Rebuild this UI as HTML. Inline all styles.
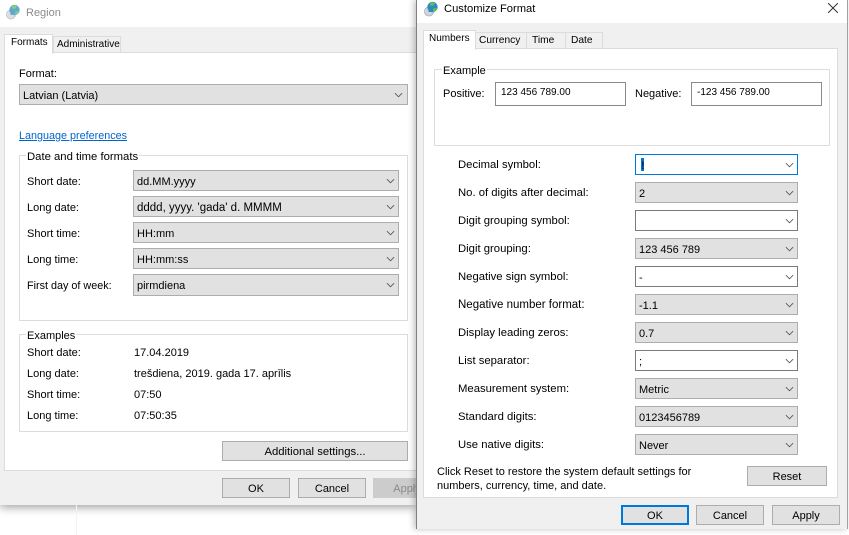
<!DOCTYPE html>
<html><head><meta charset="utf-8">
<style>
html,body{margin:0;padding:0;background:#fff}
#p{position:relative;width:849px;height:535px;overflow:hidden;background:#fff;font-family:"Liberation Sans",sans-serif;font-size:11px;color:#000;filter:blur(.35px)}
#p div,#p svg{position:absolute;box-sizing:border-box}
.t{white-space:nowrap;line-height:14px;height:14px;margin-top:1px}
.r{font-size:11.300px}
.s{background:#e1e1e1;border:1px solid #adadad}
.w{background:#fff;border:1px solid #7a7a7a}
.s svg,.w svg{right:3px;top:50%;margin-top:-3px;width:9px;height:6px}
.s .t,.w .t{left:3px;top:50%;margin-top:-6px}
.b{background:#e1e1e1;border:1px solid #adadad;text-align:center;line-height:20px;white-space:nowrap}
.g{border:1px solid #dcdcdc}
.l{background:#fff;padding:0 1px}
</style></head><body>
<div id="p">
<svg width="0" height="0" style="position:absolute"><defs>
<symbol id="c" viewBox="0 0 10 6"><path d="M1 1 L5 5 L9 1" fill="none" stroke="#555" stroke-width="1"/></symbol>
<symbol id="g" viewBox="0 0 16 16"><circle cx="6" cy="10.500" r="4.600" fill="#cdd6dc" stroke="#9aa5ad" stroke-width=".6"/><path d="M6 7.500V10.500H8.500" fill="none" stroke="#667" stroke-width=".8"/><circle cx="9.500" cy="6" r="5.200" fill="#2a8ac8"/><path d="M7 2c2-1.500 4-1 5 .5-1 1-1.500 2.500-3 2.500S6.500 3.500 7 2zM10.500 7.500c1.500-.5 3-.5 3.500-.5-.3 2-2 3.700-3.500 4-.7-1-.8-2.500 0-3.500z" fill="#5fbf4a"/></symbol>
</defs></svg>

<!-- left window -->
<div style="left:0;top:0;width:416px;height:505px;background:#f0f0f0;box-shadow:0 2px 9px rgba(0,0,0,.4)"></div>
<div style="left:76px;top:505px;width:1px;height:30px;background:#f3f3f3"></div>
<div style="left:0;top:0;width:416px;height:27px;background:#fff"></div>
<svg style="left:5px;top:4px;opacity:.75" width="16" height="16"><use href="#g"/></svg>
<div class="t" style="left:26px;top:5px;color:#8a8a8a;font-size:11px">Region</div>

<div style="left:4px;top:52px;width:412px;height:419px;background:#fff;border:1px solid #dcdcdc;border-right:0"></div>
<div style="left:53px;top:36px;width:68px;height:17px;background:#f0f0f0;border:1px solid #dcdcdc"></div>
<div class="t" style="left:57px;top:37px;font-size:10px">Administrative</div>
<div style="left:4px;top:34px;width:49px;height:20px;background:#fff;border:1px solid #dcdcdc;border-bottom:0"></div>
<div class="t" style="left:11px;top:35px;font-size:10px">Formats</div>

<div class="t" style="left:19px;top:66px">Format:</div>
<div class="s" style="left:19px;top:84px;width:389px;height:21px"><div class="t" style="left:3px">Latvian (Latvia)</div><svg style="right:4px"><use href="#c"/></svg></div>
<div class="t" style="left:19px;top:128px;color:#0066cc;text-decoration:underline;font-size:10.800px">Language preferences</div>

<div class="g" style="left:19px;top:155px;width:389px;height:166px"></div>
<div class="t l r" style="left:26px;top:149px">Date and time formats</div>
<div class="t" style="left:27px;top:174px">Short date:</div>
<div class="s" style="left:133px;top:170px;width:266px;height:21px"><div class="t">dd.MM.yyyy</div><svg><use href="#c"/></svg></div>
<div class="t" style="left:27px;top:200px">Long date:</div>
<div class="s" style="left:133px;top:196px;width:266px;height:21px"><div class="t" style="font-size:11.500px">dddd, yyyy. 'gada' d. MMMM</div><svg><use href="#c"/></svg></div>
<div class="t" style="left:27px;top:226px">Short time:</div>
<div class="s" style="left:133px;top:222px;width:266px;height:21px"><div class="t">HH:mm</div><svg><use href="#c"/></svg></div>
<div class="t" style="left:27px;top:252px">Long time:</div>
<div class="s" style="left:133px;top:248px;width:266px;height:21px"><div class="t">HH:mm:ss</div><svg><use href="#c"/></svg></div>
<div class="t" style="left:27px;top:278px;font-size:10.800px">First day of week:</div>
<div class="s" style="left:133px;top:274px;width:266px;height:22px"><div class="t">pirmdiena</div><svg><use href="#c"/></svg></div>

<div class="g" style="left:19px;top:334px;width:389px;height:98px"></div>
<div class="t l" style="left:26px;top:328px">Examples</div>
<div class="t" style="left:27px;top:345px">Short date:</div><div class="t" style="left:134px;top:345px">17.04.2019</div>
<div class="t" style="left:27px;top:366px">Long date:</div><div class="t" style="left:134px;top:366px">trešdiena, 2019. gada 17. aprīlis</div>
<div class="t" style="left:27px;top:387px">Short time:</div><div class="t" style="left:134px;top:387px">07:50</div>
<div class="t" style="left:27px;top:408px">Long time:</div><div class="t" style="left:134px;top:408px">07:50:35</div>
<div class="b" style="left:222px;top:441px;width:186px;height:20px;font-size:11.300px">Additional settings...</div>
<div class="b" style="left:222px;top:478px;width:68px;height:20px">OK</div>
<div class="b" style="left:298px;top:478px;width:68px;height:20px">Cancel</div>
<div class="b" style="left:373px;top:478px;width:68px;height:20px;background:#ccc;border-color:#ccc;color:#8a8a8a">Apply</div>

<!-- right window -->
<div style="left:416px;top:0;width:432px;height:529px;background:#f0f0f0;border-left:1px solid #808080;border-right:1px solid #a0a0a0;box-shadow:-2px 0 6px rgba(0,0,0,.25)"></div>
<div style="left:417px;top:0;width:430px;height:23px;background:#fff"></div>
<svg style="left:423px;top:1px" width="16" height="16"><use href="#g"/></svg>
<div class="t" style="left:444px;top:1px;font-size:11.200px">Customize Format</div>
<svg style="left:828px;top:3px" width="10" height="10"><path d="M0 0L10 10M10 0L0 10" stroke="#333" stroke-width="1" fill="none"/></svg>

<div style="left:423px;top:48px;width:415px;height:450px;background:#fff;border:1px solid #dcdcdc"></div>
<div style="left:475px;top:32px;width:52px;height:17px;background:#f0f0f0;border:1px solid #dcdcdc"></div>
<div class="t" style="left:479px;top:33px;font-size:10.200px">Currency</div>
<div style="left:526px;top:32px;width:40px;height:17px;background:#f0f0f0;border:1px solid #dcdcdc"></div>
<div class="t" style="left:532px;top:33px;font-size:10.200px">Time</div>
<div style="left:565px;top:32px;width:38px;height:17px;background:#f0f0f0;border:1px solid #dcdcdc"></div>
<div class="t" style="left:571px;top:33px;font-size:10.200px">Date</div>
<div style="left:423px;top:30px;width:53px;height:20px;background:#fff;border:1px solid #dcdcdc;border-bottom:0"></div>
<div class="t" style="left:429px;top:31px;font-size:10px">Numbers</div>

<div class="g" style="left:434px;top:69px;width:396px;height:77px"></div>
<div class="t l" style="left:442px;top:63px">Example</div>
<div class="t" style="left:443px;top:86px">Positive:</div>
<div class="w" style="left:495px;top:82px;width:131px;height:24px;border-color:#8a8a8a"><div class="t" style="left:5px;top:2px;margin-top:1px;font-size:10px">123 456 789.00</div></div>
<div class="t" style="left:635px;top:86px">Negative:</div>
<div class="w" style="left:691px;top:82px;width:131px;height:24px;border-color:#8a8a8a"><div class="t" style="left:5px;top:2px;margin-top:1px;font-size:10px">-123 456 789.00</div></div>

<div class="t r" style="left:458px;top:157px">Decimal symbol:</div>
<div class="w" style="left:635px;top:154px;width:163px;height:21px;border-color:#0078d7"><div style="left:5px;top:3px;width:3px;height:13px;background:#0078d7"></div><div class="t" style="left:5px;color:#223;font-weight:bold">!</div><svg><use href="#c"/></svg></div>
<div class="t r" style="left:458px;top:185px">No. of digits after decimal:</div>
<div class="s" style="left:635px;top:182px;width:163px;height:21px"><div class="t">2</div><svg><use href="#c"/></svg></div>
<div class="t r" style="left:458px;top:213px">Digit grouping symbol:</div>
<div class="w" style="left:635px;top:210px;width:163px;height:21px"><svg><use href="#c"/></svg></div>
<div class="t r" style="left:458px;top:241px">Digit grouping:</div>
<div class="s" style="left:635px;top:238px;width:163px;height:21px"><div class="t">123 456 789</div><svg><use href="#c"/></svg></div>
<div class="t r" style="left:458px;top:269px">Negative sign symbol:</div>
<div class="w" style="left:635px;top:266px;width:163px;height:21px"><div class="t">-</div><svg><use href="#c"/></svg></div>
<div class="t r" style="left:458px;top:297px;font-size:11.500px">Negative number format:</div>
<div class="s" style="left:635px;top:294px;width:163px;height:21px"><div class="t">-1.1</div><svg><use href="#c"/></svg></div>
<div class="t r" style="left:458px;top:325px">Display leading zeros:</div>
<div class="s" style="left:635px;top:322px;width:163px;height:21px"><div class="t">0.7</div><svg><use href="#c"/></svg></div>
<div class="t r" style="left:458px;top:353px">List separator:</div>
<div class="w" style="left:635px;top:350px;width:163px;height:21px"><div class="t">;</div><svg><use href="#c"/></svg></div>
<div class="t r" style="left:458px;top:381px">Measurement system:</div>
<div class="s" style="left:635px;top:378px;width:163px;height:21px"><div class="t">Metric</div><svg><use href="#c"/></svg></div>
<div class="t r" style="left:458px;top:409px">Standard digits:</div>
<div class="s" style="left:635px;top:406px;width:163px;height:21px"><div class="t">0123456789</div><svg><use href="#c"/></svg></div>
<div class="t r" style="left:458px;top:437px">Use native digits:</div>
<div class="s" style="left:635px;top:434px;width:163px;height:21px"><div class="t">Never</div><svg><use href="#c"/></svg></div>

<div class="t" style="left:437px;top:464px">Click Reset to restore the system default settings for</div>
<div class="t" style="left:437px;top:478px">numbers, currency, time, and date.</div>
<div class="b" style="left:747px;top:466px;width:80px;height:20px">Reset</div>
<div class="b" style="left:621px;top:505px;width:68px;height:20px;border:2px solid #0078d7;line-height:18px">OK</div>
<div class="b" style="left:696px;top:505px;width:68px;height:20px">Cancel</div>
<div class="b" style="left:772px;top:505px;width:68px;height:20px">Apply</div>
</div>
</body></html>
